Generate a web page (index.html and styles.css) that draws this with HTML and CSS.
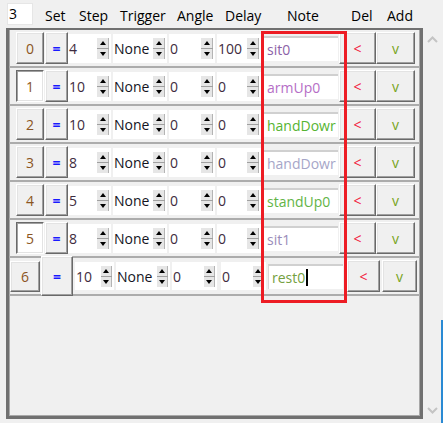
FILE: index.html
```html
<!DOCTYPE html>
<html>
<head>
<meta charset="utf-8">
<link rel="stylesheet" href="styles.css">
</head>
<body>
<div class="top">
  <div class="count">3</div>
  <span class="h h-set">Set</span>
  <span class="h h-step">Step</span>
  <span class="h h-trig">Trigger</span>
  <span class="h h-angle">Angle</span>
  <span class="h h-delay">Delay</span>
  <span class="h h-note">Note</span>
  <span class="h h-del">Del</span>
  <span class="h h-add">Add</span>
</div>
<div class="main">
  <div class="frame">
    <div class="rows">
      <div class="row">
        <div class="btn num">0</div>
        <div class="btn eq">=</div>
        <div class="spin s-step"><span class="val">4</span><span class="arrows"><i class="up"></i><i class="dn"></i></span></div>
        <div class="spin s-trig"><span class="val txt">None</span><span class="arrows"><i class="up"></i><i class="dn"></i></span></div>
        <div class="spin s-angle"><span class="val">0</span><span class="arrows"><i class="up"></i><i class="dn"></i></span></div>
        <div class="spin s-delay"><span class="val">100</span><span class="arrows"><i class="up"></i><i class="dn"></i></span></div>
        <div class="note c-sit0">sit0</div>
        <div class="btn del">&lt;</div>
        <div class="btn add">v</div>
      </div>
      <div class="row">
        <div class="btn num on">1</div>
        <div class="btn eq">=</div>
        <div class="spin s-step"><span class="val">10</span><span class="arrows"><i class="up"></i><i class="dn"></i></span></div>
        <div class="spin s-trig"><span class="val txt">None</span><span class="arrows"><i class="up"></i><i class="dn"></i></span></div>
        <div class="spin s-angle"><span class="val">0</span><span class="arrows"><i class="up"></i><i class="dn"></i></span></div>
        <div class="spin s-delay"><span class="val">0</span><span class="arrows"><i class="up"></i><i class="dn"></i></span></div>
        <div class="note c-arm">armUp0</div>
        <div class="btn del">&lt;</div>
        <div class="btn add">v</div>
      </div>
      <div class="row">
        <div class="btn num">2</div>
        <div class="btn eq">=</div>
        <div class="spin s-step"><span class="val">10</span><span class="arrows"><i class="up"></i><i class="dn"></i></span></div>
        <div class="spin s-trig"><span class="val txt">None</span><span class="arrows"><i class="up"></i><i class="dn"></i></span></div>
        <div class="spin s-angle"><span class="val">0</span><span class="arrows"><i class="up"></i><i class="dn"></i></span></div>
        <div class="spin s-delay"><span class="val">0</span><span class="arrows"><i class="up"></i><i class="dn"></i></span></div>
        <div class="note c-hand1">handDowr</div>
        <div class="btn del">&lt;</div>
        <div class="btn add">v</div>
      </div>
      <div class="row">
        <div class="btn num">3</div>
        <div class="btn eq">=</div>
        <div class="spin s-step"><span class="val">8</span><span class="arrows"><i class="up"></i><i class="dn"></i></span></div>
        <div class="spin s-trig"><span class="val txt">None</span><span class="arrows"><i class="up"></i><i class="dn"></i></span></div>
        <div class="spin s-angle"><span class="val">0</span><span class="arrows"><i class="up"></i><i class="dn"></i></span></div>
        <div class="spin s-delay"><span class="val">0</span><span class="arrows"><i class="up"></i><i class="dn"></i></span></div>
        <div class="note c-hand2">handDowr</div>
        <div class="btn del">&lt;</div>
        <div class="btn add">v</div>
      </div>
      <div class="row">
        <div class="btn num">4</div>
        <div class="btn eq">=</div>
        <div class="spin s-step"><span class="val">5</span><span class="arrows"><i class="up"></i><i class="dn"></i></span></div>
        <div class="spin s-trig"><span class="val txt">None</span><span class="arrows"><i class="up"></i><i class="dn"></i></span></div>
        <div class="spin s-angle"><span class="val">0</span><span class="arrows"><i class="up"></i><i class="dn"></i></span></div>
        <div class="spin s-delay"><span class="val">0</span><span class="arrows"><i class="up"></i><i class="dn"></i></span></div>
        <div class="note c-stand">standUp0</div>
        <div class="btn del">&lt;</div>
        <div class="btn add">v</div>
      </div>
      <div class="row">
        <div class="btn num on">5</div>
        <div class="btn eq">=</div>
        <div class="spin s-step"><span class="val">8</span><span class="arrows"><i class="up"></i><i class="dn"></i></span></div>
        <div class="spin s-trig"><span class="val txt">None</span><span class="arrows"><i class="up"></i><i class="dn"></i></span></div>
        <div class="spin s-angle"><span class="val">0</span><span class="arrows"><i class="up"></i><i class="dn"></i></span></div>
        <div class="spin s-delay"><span class="val">0</span><span class="arrows"><i class="up"></i><i class="dn"></i></span></div>
        <div class="note c-sit1">sit1</div>
        <div class="btn del">&lt;</div>
        <div class="btn add">v</div>
      </div>
    </div>
    <div class="row row-last">
      <div class="btn num">6</div>
      <div class="btn eq">=</div>
      <div class="spin s-step"><span class="val">10</span><span class="arrows"><i class="up"></i><i class="dn"></i></span></div>
      <div class="spin s-trig"><span class="val txt">None</span><span class="arrows"><i class="up"></i><i class="dn"></i></span></div>
      <div class="spin s-angle"><span class="val">0</span><span class="arrows"><i class="up"></i><i class="dn"></i></span></div>
      <div class="spin s-delay"><span class="val">0</span><span class="arrows"><i class="up"></i><i class="dn"></i></span></div>
      <div class="note c-rest">rest0<span class="caret"></span></div>
      <div class="btn del">&lt;</div>
      <div class="btn add">v</div>
    </div>
    <div class="highlight"></div>
  </div>
  <div class="scroll">
    <svg class="chev" width="11" height="7" viewBox="0 0 11 7"><polyline points="1,6 5.5,1.5 10,6" fill="none" stroke="#c4c4c4" stroke-width="2"/></svg>
    <svg class="chev" width="11" height="7" viewBox="0 0 11 7"><polyline points="1,1 5.5,5.5 10,1" fill="none" stroke="#c4c4c4" stroke-width="2"/></svg>
  </div>
  <div class="edge"></div>
</div>
</body>
</html>
```

FILE: styles.css
```css
* { box-sizing: border-box; }

body {
  margin: 0;
  width: 443px;
  height: 423px;
  overflow: hidden;
  background: #f0f0f0;
  font-family: "Open Sans", "Noto Sans", sans-serif;
  font-size: 14px;
  color: #000;
}

.top {
  display: flex;
  align-items: flex-start;
  height: 28px;
}

.count {
  margin: 3px 0 0 7px;
  width: 26px;
  height: 22px;
  background: #fff;
  border: 1px solid #e6e6e6;
  padding-left: 1px;
  line-height: 20px;
}

.h { margin-top: 6px; line-height: 19px; white-space: nowrap; }
.h-set { margin-left: 12px; width: 34px; }
.h-step { width: 41px; }
.h-trig { width: 57px; }
.h-angle { width: 48px; }
.h-delay { width: 62px; }
.h-note { width: 64px; }
.h-del { width: 36px; }

.main {
  display: flex;
  height: 395px;
}

.frame {
  position: relative;
  margin-left: 6px;
  width: 417px;
  height: 391px;
  border-style: solid;
  border-color: #707070;
  border-width: 2px 3px 3px 3px;
  box-shadow: inset -1px -1px 0 #a8a8a8, inset 1px 0 0 #a8a8a8;
}

.row {
  display: flex;
  align-items: center;
  height: 38px;
  padding-left: 7px;
  border-bottom: 2px solid #acacac;
}

.btn {
  display: flex;
  align-items: center;
  justify-content: center;
  height: 32px;
  background: #f0f0f0;
  border: 1px solid;
  border-color: #ffffff #696969 #696969 #ffffff;
  box-shadow: inset -1px -1px 0 #a0a0a0, inset 1px 1px 0 #e3e3e3;
  line-height: 19px;
}

.btn.on {
  background: #fff;
  border-color: #696969 #ffffff #ffffff #696969;
  box-shadow: inset 1px 1px 0 #a0a0a0, inset -1px -1px 0 #e3e3e3;
}

.num { width: 28px; margin-right: 1px; color: #8b5522; }
.eq { width: 23px; color: #1a1aff; font-weight: bold; }
.del { width: 37px; color: #f2203c; }
.add { width: 39px; color: #78a41c; }

.spin {
  display: flex;
  align-items: center;
  height: 29px;
  background: #fff;
  margin-right: 2px;
}

.spin .val {
  flex: 1;
  padding-left: 1px;
  color: #3e2c40;
  line-height: 19px;
  white-space: nowrap;
  overflow: hidden;
}

.spin .val.txt { color: #14141e; }

.s-step { width: 43px; }
.s-trig { width: 54px; }
.s-angle { width: 46px; }
.s-delay { width: 44px; }

.arrows {
  display: flex;
  flex-direction: column;
  width: 12px;
  height: 21px;
  margin-right: 2px;
  background: #a0a0a0;
  gap: 1px;
}

.arrows i {
  flex: 1;
  display: flex;
  align-items: center;
  justify-content: center;
  background: #e6e6e6;
  border-right: 1px solid #b4b4b4;
}

.arrows i::before {
  content: "";
  width: 0;
  height: 0;
  border-left: 3.5px solid transparent;
  border-right: 3.5px solid transparent;
}

.arrows .up::before { border-bottom: 4px solid #000; }
.arrows .dn::before { border-top: 4px solid #000; }

.note {
  display: flex;
  align-items: center;
  width: 75px;
  height: 25px;
  margin-right: 1px;
  padding-left: 3px;
  background: #fff;
  border-top: 2px solid #d0d0d0;
  border-left: 1px solid #d8d8d8;
  line-height: 19px;
  white-space: nowrap;
  overflow: hidden;
}

.c-sit0 { color: #8c62a8; }
.c-arm { color: #b56ec6; }
.c-hand1 { color: #56b432; }
.c-hand2 { color: #a6a6c8; }
.c-stand { color: #62b446; }
.c-sit1 { color: #9a8cba; }
.c-rest { color: #74a040; }

.caret {
  display: inline-block;
  width: 2px;
  height: 17px;
  margin-left: 1px;
  background: #000;
}

.row-last {
  padding-left: 1px;
}

.row-last .num { width: 30px; height: 31px; }
.row-last .eq { width: 32px; height: 40px; margin-right: 2px; }
.row-last .spin { height: 28px; }
.row-last .s-step { width: 39px; }
.row-last .s-trig { width: 54px; }
.row-last .s-angle { width: 45px; margin-right: 4px; }
.row-last .s-delay { width: 45px; }
.row-last .arrows { width: 11px; }
.row-last .note { margin-right: 4px; }
.row-last .del { width: 33px; margin-right: 2px; }
.row-last .add { width: 35px; }

.highlight {
  position: absolute;
  left: 252px;
  top: 1px;
  width: 86px;
  height: 272px;
  border: 3px solid #ed1c24;
  pointer-events: none;
}

.scroll {
  width: 18px;
  height: 391px;
  display: flex;
  flex-direction: column;
  justify-content: space-between;
  align-items: center;
  padding: 8px 0 5px;
}

.chev { display: block; }

.edge {
  align-self: flex-start;
  margin-top: 292px;
  width: 2px;
  height: 103px;
  background: #2a8ad4;
}
```
